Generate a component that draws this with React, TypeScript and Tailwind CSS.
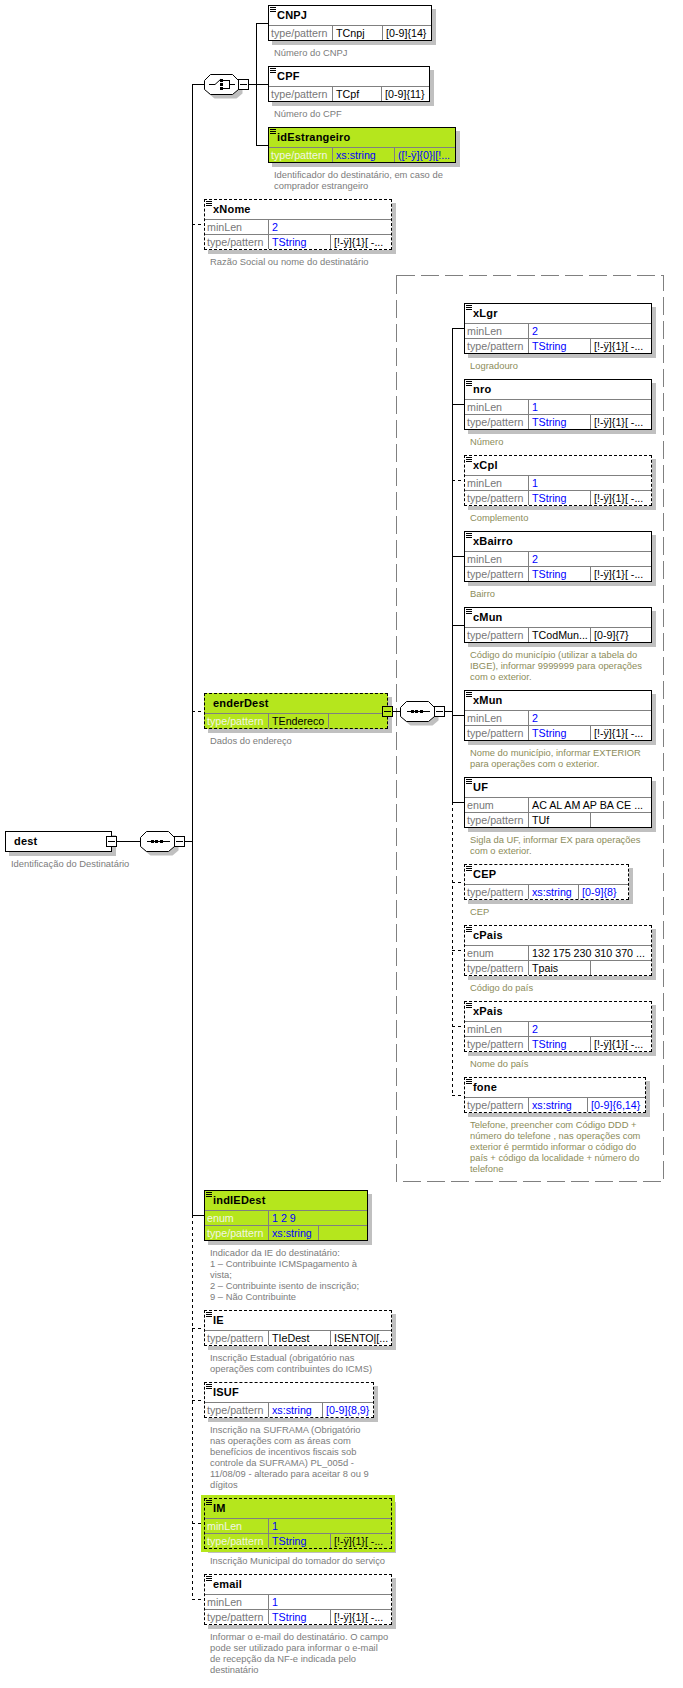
import clsx from "clsx";

type Row = { label: string; value: string; blue?: boolean; extra?: string; extraBlue?: boolean; split?: boolean };

type NodeProps = {
  x: number;
  y: number;
  w: number;
  name: string;
  rows?: Row[];
  col2?: number;
  caption: string[];
  green?: boolean;
  dashed?: boolean;
  olive?: boolean;
  ring?: boolean;
  noIcon?: boolean;
  minus?: boolean;
};

const minLen = (value: string): Row => ({ label: "minLen", value, blue: true });
const tString: Row = { label: "type/pattern", value: "TString", blue: true, extra: "[!-ÿ]{1}[ -...", split: true };

function Minus({ green, className }: { green?: boolean; className?: string }) {
  return (
    <div
      className={clsx(
        "flex h-[11px] w-[11px] items-center justify-center border border-black",
        green ? "bg-[#b5e61d]" : "bg-white",
        className
      )}
    >
      <div className="h-px w-[7px] bg-black" />
    </div>
  );
}

function Node({ x, y, w, name, rows = [], col2 = 126, caption, green, dashed, olive, ring, noIcon, minus }: NodeProps) {
  return (
    <div className="absolute" style={{ left: x, top: y }}>
      <div
        className={clsx(
          "relative border border-black",
          dashed && "border-dashed",
          green ? "bg-[#b5e61d]" : "bg-white",
          ring ? "shadow-[0_0_0_3px_#b5e61d,4px_4px_0_0_#c0c0c0]" : "shadow-[4px_4px_0_0_#c0c0c0]"
        )}
        style={{ width: w }}
      >
        {!noIcon && (
          <div className="absolute left-px top-px flex w-[6px] flex-col gap-px">
            <div className="h-px bg-black" />
            <div className="h-px bg-black" />
            <div className="h-px bg-black" />
          </div>
        )}
        <div className="flex h-[19px] items-center pl-2 text-[11px] font-bold tracking-[0.2px] text-black">{name}</div>
        {rows.map((row, i) => (
          <div key={i} className="flex h-[15px] items-center border-t border-[#808080] text-[10.7px] leading-[14px]">
            <div
              className={clsx(
                "flex h-full w-[64px] shrink-0 items-center border-r border-[#808080] pl-[2px]",
                green ? "text-[#f2f5e6]" : "text-[#777777]"
              )}
            >
              {row.label}
            </div>
            {row.split ? (
              <>
                <div
                  className={clsx(
                    "flex h-full shrink-0 items-center overflow-hidden whitespace-nowrap border-r border-[#808080] pl-[3px]",
                    row.blue ? "text-[#0000ff]" : "text-black"
                  )}
                  style={{ width: col2 - 64 }}
                >
                  {row.value}
                </div>
                <div
                  className={clsx(
                    "flex h-full flex-1 items-center overflow-hidden whitespace-nowrap pl-[3px]",
                    row.extraBlue ? "text-[#0000ff]" : "text-black"
                  )}
                >
                  {row.extra}
                </div>
              </>
            ) : (
              <div
                className={clsx(
                  "flex h-full flex-1 items-center whitespace-nowrap pl-[3px]",
                  row.blue ? "text-[#0000ff]" : "text-black"
                )}
              >
                {row.value}
              </div>
            )}
          </div>
        ))}
        {minus && (
          <Minus
            green={green}
            className={clsx("absolute right-[-6px]", rows.length > 0 ? "top-[12px]" : "top-[4px]")}
          />
        )}
      </div>
      <div
        className={clsx(
          "ml-[6px] mt-[6px] whitespace-nowrap text-[9.4px] leading-[11px]",
          olive ? "text-[#8c8c5a]" : "text-[#7c7c7c]"
        )}
      >
        {caption.map((line, i) => (
          <div key={i}>{line}</div>
        ))}
      </div>
    </div>
  );
}

// linhas do diagrama, coordenadas de pixel
function Connectors() {
  const solid = [
    "M185 841.5H192", "M192.5 84V1215", "M192 84.5H204", "M192 1215.5H204",
    "M256.5 23V145", "M256 23.5H268", "M249 84.5H268", "M256 145.5H268",
    "M452.5 328V802", "M452 328.5H464", "M452 404.5H464", "M452 556.5H464", "M452 625.5H464", "M452 715.5H464", "M452 802.5H464",
    "M393 711.5H400", "M445 711.5H452",
    "M117 841.5H140",
  ];
  const dashed = [
    "M192.5 1215V1599", "M192 224.5H204", "M192 711.5H204", "M192 1328.5H204", "M192 1400.5H204", "M192 1523.5H204", "M192 1599.5H204",
    "M452.5 802V1095", "M452 480.5H464", "M452 882.5H464", "M452 950.5H464", "M452 1026.5H464", "M452 1095.5H464",
  ];
  return (
    <svg className="absolute left-0 top-0" width={683} height={1688} shapeRendering="crispEdges">
      <rect x={396.5} y={275.5} width={267} height={906} fill="none" stroke="#808080" strokeDasharray="18 6" />
      {solid.map((d) => (
        <path key={d} d={d} stroke="#000" fill="none" />
      ))}
      {dashed.map((d) => (
        <path key={d} d={d} stroke="#000" fill="none" strokeDasharray="3 3" />
      ))}
    </svg>
  );
}

function Compositor({ x, y, kind }: { x: number; y: number; kind: "seq" | "choice" }) {
  const points = "6.5,0.5 28.5,0.5 34.5,6.5 34.5,15.5 28.5,20.5 6.5,20.5 0.5,15.5 0.5,6.5";
  return (
    <div className="absolute flex items-center" style={{ left: x, top: y }}>
      <svg width={40} height={26} className="block">
        <polygon points={points} fill="#c0c0c0" transform="translate(4 4)" />
        <polygon points={points} fill="#fff" stroke="#000" />
        {kind === "seq" ? (
          <g shapeRendering="crispEdges">
            <path d="M7 10.5H30" stroke="#000" />
            <rect x={11} y={9} width={3} height={3} />
            <rect x={15} y={9} width={3} height={3} />
            <rect x={20} y={9} width={3} height={3} />
          </g>
        ) : (
          <g fill="none" stroke="#000">
            <path d="M5 10.5H11L17 5" />
            <path d="M19 6.5H25.5V14.5H19M25.5 10.5H31" shapeRendering="crispEdges" />
            <g fill="#000" stroke="none" shapeRendering="crispEdges">
              <rect x={16} y={5} width={3} height={3} />
              <rect x={16} y={9} width={3} height={3} />
              <rect x={16} y={13} width={3} height={3} />
            </g>
          </g>
        )}
      </svg>
      <Minus className="absolute left-[34px] top-[5px]" />
    </div>
  );
}

export default function App() {
  return (
    <div className="relative h-[1688px] w-[683px] overflow-hidden bg-white font-['Liberation_Sans',Arial,sans-serif]">
      <Connectors />

      {/* raiz */}
      <Node x={5} y={831} w={107} name="dest" noIcon minus caption={["Identificação do Destinatário"]} />
      <Compositor x={140} y={831} kind="seq" />

      {/* choice CNPJ / CPF */}
      <Compositor x={204} y={74} kind="choice" />
      <Node
        x={268} y={5} w={164} col2={114} name="CNPJ"
        rows={[{ label: "type/pattern", value: "TCnpj", extra: "[0-9]{14}", split: true }]}
        caption={["Número do CNPJ"]}
      />
      <Node
        x={268} y={66} w={162} col2={113} name="CPF"
        rows={[{ label: "type/pattern", value: "TCpf", extra: "[0-9]{11}", split: true }]}
        caption={["Número do CPF"]}
      />
      <Node
        x={268} y={127} w={188} green name="idEstrangeiro"
        rows={[{ label: "type/pattern", value: "xs:string", blue: true, extra: "([!-ÿ]{0}|[!...", extraBlue: true, split: true }]}
        caption={["Identificador do destinatário, em caso de", "comprador estrangeiro"]}
      />

      <Node x={204} y={199} w={188} dashed name="xNome" rows={[minLen("2"), tString]} caption={["Razão Social ou nome do destinatário"]} />

      <Node
        x={204} y={693} w={184} col2={124} green dashed noIcon minus name="enderDest"
        rows={[{ label: "type/pattern", value: "TEndereco", split: true }]}
        caption={["Dados do endereço"]}
      />
      <Compositor x={400} y={701} kind="seq" />

      {/* filhos de enderDest */}
      <Node x={464} y={303} w={188} olive name="xLgr" rows={[minLen("2"), tString]} caption={["Logradouro"]} />
      <Node x={464} y={379} w={188} olive name="nro" rows={[minLen("1"), tString]} caption={["Número"]} />
      <Node x={464} y={455} w={188} olive dashed name="xCpl" rows={[minLen("1"), tString]} caption={["Complemento"]} />
      <Node x={464} y={531} w={188} olive name="xBairro" rows={[minLen("2"), tString]} caption={["Bairro"]} />
      <Node
        x={464} y={607} w={188} olive name="cMun"
        rows={[{ label: "type/pattern", value: "TCodMun...", extra: "[0-9]{7}", split: true }]}
        caption={["Código do município (utilizar a tabela do", "IBGE), informar 9999999 para operações", "com o exterior."]}
      />
      <Node
        x={464} y={690} w={188} olive name="xMun" rows={[minLen("2"), tString]}
        caption={["Nome do município, informar EXTERIOR", "para operações com o exterior."]}
      />
      <Node
        x={464} y={777} w={188} olive name="UF"
        rows={[{ label: "enum", value: "AC AL AM AP BA CE ..." }, { label: "type/pattern", value: "TUf", split: true }]}
        caption={["Sigla da UF, informar EX para operações", "com o exterior."]}
      />
      <Node
        x={464} y={864} w={165} col2={114} olive dashed name="CEP"
        rows={[{ label: "type/pattern", value: "xs:string", blue: true, extra: "[0-9]{8}", extraBlue: true, split: true }]}
        caption={["CEP"]}
      />
      <Node
        x={464} y={925} w={188} olive dashed name="cPais"
        rows={[{ label: "enum", value: "132 175 230 310 370 ..." }, { label: "type/pattern", value: "Tpais", split: true }]}
        caption={["Código do país"]}
      />
      <Node x={464} y={1001} w={188} olive dashed name="xPais" rows={[minLen("2"), tString]} caption={["Nome do país"]} />
      <Node
        x={464} y={1077} w={182} col2={123} olive dashed name="fone"
        rows={[{ label: "type/pattern", value: "xs:string", blue: true, extra: "[0-9]{6,14}", extraBlue: true, split: true }]}
        caption={[
          "Telefone, preencher com Código DDD +",
          "número do telefone , nas operações com",
          "exterior é permtido informar o código do",
          "país + código da localidade + número do",
          "telefone",
        ]}
      />

      <Node
        x={204} y={1190} w={164} col2={114} green name="indIEDest"
        rows={[
          { label: "enum", value: "1 2 9", blue: true },
          { label: "type/pattern", value: "xs:string", blue: true, split: true },
        ]}
        caption={[
          "Indicador da IE do destinatário:",
          "1 – Contribuinte ICMSpagamento à",
          "vista;",
          "2 – Contribuinte isento de inscrição;",
          "9 – Não Contribuinte",
        ]}
      />
      <Node
        x={204} y={1310} w={188} dashed name="IE"
        rows={[{ label: "type/pattern", value: "TIeDest", extra: "ISENTO|[...", split: true }]}
        caption={["Inscrição Estadual (obrigatório nas", "operações com contribuintes do ICMS)"]}
      />
      <Node
        x={204} y={1382} w={170} col2={118} dashed name="ISUF"
        rows={[{ label: "type/pattern", value: "xs:string", blue: true, extra: "[0-9]{8,9}", extraBlue: true, split: true }]}
        caption={[
          "Inscrição na SUFRAMA (Obrigatório",
          "nas operações com as áreas com",
          "benefícios de incentivos fiscais sob",
          "controle da SUFRAMA) PL_005d -",
          "11/08/09 - alterado para aceitar 8 ou 9",
          "dígitos",
        ]}
      />
      <Node
        x={204} y={1498} w={188} green ring dashed name="IM"
        rows={[minLen("1"), tString]}
        caption={["Inscrição Municipal do tomador do serviço"]}
      />
      <Node
        x={204} y={1574} w={188} dashed name="email"
        rows={[minLen("1"), tString]}
        caption={[
          "Informar o e-mail do destinatário. O campo",
          "pode ser utilizado para informar o e-mail",
          "de recepção da NF-e indicada pelo",
          "destinatário",
        ]}
      />
    </div>
  );
}
